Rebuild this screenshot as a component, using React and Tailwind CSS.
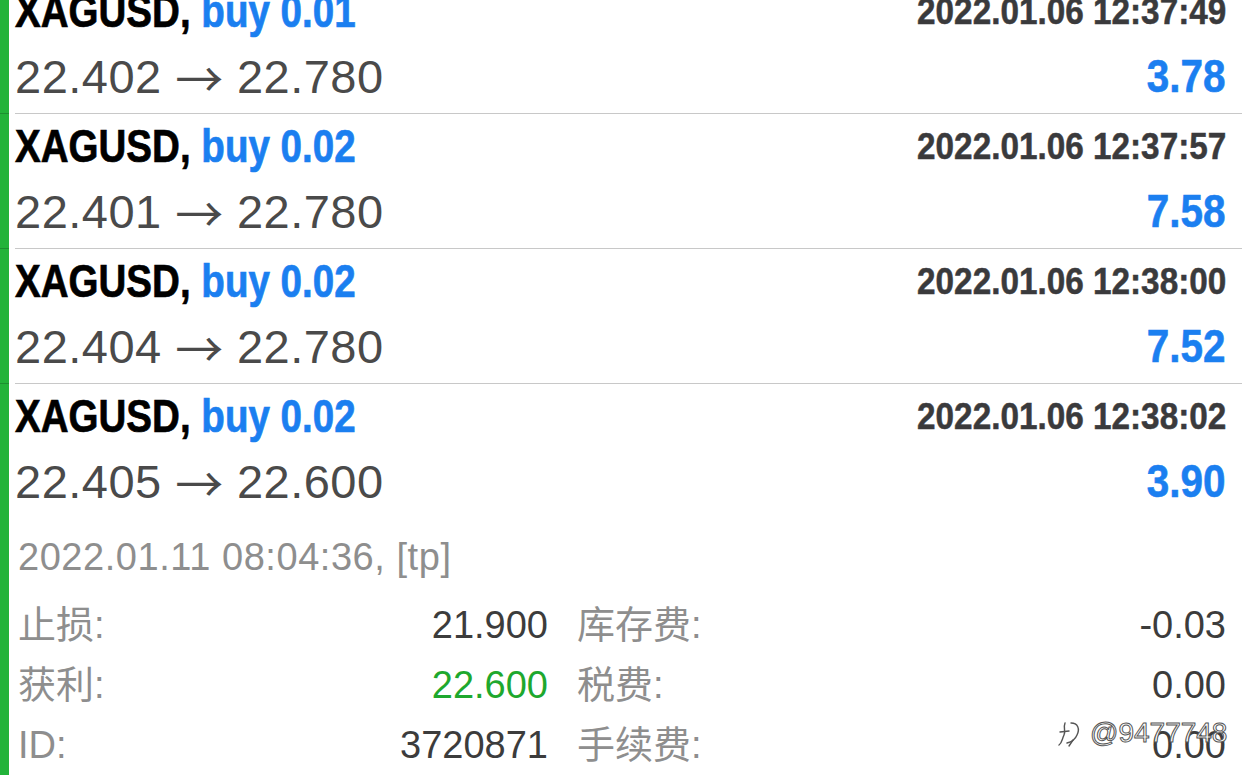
import React from "react";

const rows = [
  { lot: "0.01", time: "2022.01.06 12:37:49", open: "22.402", close: "22.780", profit: "3.78" },
  { lot: "0.02", time: "2022.01.06 12:37:57", open: "22.401", close: "22.780", profit: "7.58" },
  { lot: "0.02", time: "2022.01.06 12:38:00", open: "22.404", close: "22.780", profit: "7.52" },
  { lot: "0.02", time: "2022.01.06 12:38:02", open: "22.405", close: "22.600", profit: "3.90" },
];

const F = { fontFamily: '"Liberation Sans", Arial, sans-serif' };
const CJK = { fontFamily: '"Liberation Sans", "Noto Sans CJK SC", sans-serif' };
const ARROW = { fontFamily: '"Noto Sans CJK SC", "DejaVu Sans", sans-serif' };

function Head({ r }) {
  return (
    <>
      <div className="flex items-center justify-between h-[65px] whitespace-nowrap">
        <span className="inline-block origin-left scale-x-[0.838] text-[46px] font-bold leading-[65px] text-black [-webkit-text-stroke:0.7px_currentColor]" style={F}>
          XAGUSD, <span className="text-[#1b7ff0]">buy {r.lot}</span>
        </span>
        <span className="inline-block origin-right scale-x-[0.925] text-[36px] font-bold leading-[65px] text-[#3a3a3c] [-webkit-text-stroke:0.5px_currentColor]" style={F}>
          {r.time}
        </span>
      </div>
      <div className="flex items-center justify-between h-[65px] whitespace-nowrap">
        <span className="text-[47px] leading-[65px] tracking-[0.5px] text-[#4a4a4a]" style={F}>
          {r.open} <span className="inline-block w-[48px] text-[48px] leading-[65px] align-top" style={ARROW}>→</span> {r.close}
        </span>
        <span className="inline-block origin-right scale-x-[0.88] text-[46px] font-bold leading-[65px] text-[#1b7ff0] [-webkit-text-stroke:0.6px_currentColor]" style={F}>
          {r.profit}
        </span>
      </div>
    </>
  );
}

function Detail({ label, value, valueClass = "text-[#3c3c3c]" }) {
  return (
    <div className="flex items-center justify-between h-[60px] whitespace-nowrap text-[38px] leading-[60px]" style={CJK}>
      <span className="text-[#8e8e8e] pl-[3px]">{label}</span>
      <span className={valueClass}>{value}</span>
    </div>
  );
}

export default function App() {
  return (
    <div className="relative w-[1242px] h-[777px] overflow-hidden bg-white">
      <div className="mt-[-21px]">
        {rows.slice(0, 3).map((r, i) => (
          <div key={i} className="flex">
            <div className="w-[9px] shrink-0 bg-[#22b33a] border-b border-[#1c8f30]" />
            <div className="flex-1 ml-[6px] pr-[16px] pb-[4px] border-b border-[#c8c8c8]">
              <Head r={r} />
            </div>
          </div>
        ))}
        <div className="flex">
          <div className="w-[9px] shrink-0 bg-[#22b33a]" />
          <div className="flex-1 ml-[6px] pr-[16px]">
            <Head r={rows[3]} />
            <div className="mt-[13px] pl-[3px] h-[60px] leading-[60px] text-[38px] tracking-[0.55px] text-[#8e8e8e] whitespace-nowrap" style={F}>
              2022.01.11 08:04:36, [tp]
            </div>
            <div className="mt-[8px] grid grid-cols-[533px_1fr] gap-x-[26px]">
              <Detail label="止损:" value="21.900" />
              <Detail label="库存费:" value="-0.03" />
              <Detail label="获利:" value="22.600" valueClass="text-[#1ea82e]" />
              <Detail label="税费:" value="0.00" />
              <Detail label="ID:" value="3720871" />
              <Detail label="手续费:" value="0.00" />
            </div>
          </div>
        </div>
      </div>
      <div className="absolute left-[1056px] top-[718px] flex items-center gap-[6px] whitespace-nowrap">
        <svg width="28" height="30" viewBox="0 0 28 30" fill="none" stroke="#555" strokeWidth="1.4" strokeLinecap="round">
          <path d="M9 5 C 7 10, 10 13, 8 17 C 6 21, 6 25, 3 27" />
          <path d="M4 14 L 13 13" />
          <path d="M15 5 C 22 5, 24 11, 21 17 C 19 22, 15 24, 11 25" />
          <path d="M17 22 L 13 28" />
        </svg>
        <span className="text-[28px] leading-[30px] text-white [-webkit-text-stroke:1px_#555]" style={F}>
          @9477748
        </span>
      </div>
    </div>
  );
}
